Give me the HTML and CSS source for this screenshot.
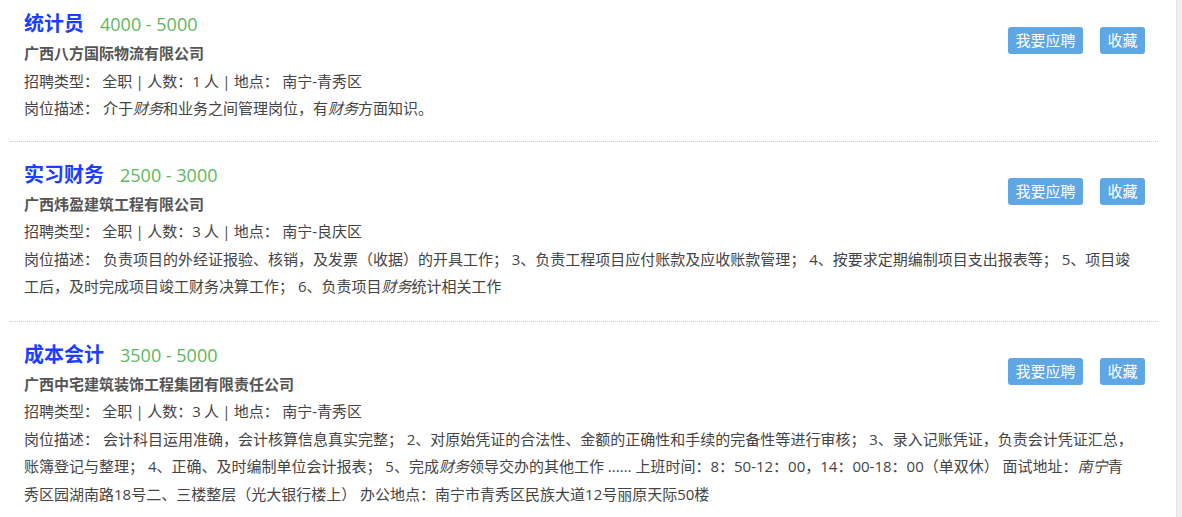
FILE: index.html
```html
<!DOCTYPE html>
<html lang="zh-CN">
<head>
<meta charset="utf-8">
<title>职位列表</title>
<link rel="stylesheet" href="styles.css">
</head>
<body>
<div class="list">
  <div class="job">
    <div class="head">
      <div class="info">
        <div class="title"><a class="name">统计员</a><span class="salary">4000 - 5000</span></div>
        <div class="company">广西八方国际物流有限公司</div>
        <div class="meta">招聘类型： 全职 | 人数：1 人 | 地点： 南宁-青秀区</div>
      </div>
      <div class="actions">
        <a class="btn">我要应聘</a>
        <a class="btn">收藏</a>
      </div>
    </div>
    <div class="desc">岗位描述： 介于<em>财务</em>和业务之间管理岗位，有<em>财务</em>方面知识。</div>
  </div>

  <div class="job">
    <div class="head">
      <div class="info">
        <div class="title"><a class="name">实习财务</a><span class="salary">2500 - 3000</span></div>
        <div class="company">广西炜盈建筑工程有限公司</div>
        <div class="meta">招聘类型： 全职 | 人数：3 人 | 地点： 南宁-良庆区</div>
      </div>
      <div class="actions">
        <a class="btn">我要应聘</a>
        <a class="btn">收藏</a>
      </div>
    </div>
    <div class="desc">岗位描述： 负责项目的外经证报验、核销，及发票（收据）的开具工作； 3、负责工程项目应付账款及应收账款管理； 4、按要求定期编制项目支出报表等； 5、项目竣工后，及时完成项目竣工财务决算工作； 6、负责项目<em>财务</em>统计相关工作</div>
  </div>

  <div class="job">
    <div class="head">
      <div class="info">
        <div class="title"><a class="name">成本会计</a><span class="salary">3500 - 5000</span></div>
        <div class="company">广西中宅建筑装饰工程集团有限责任公司</div>
        <div class="meta">招聘类型： 全职 | 人数：3 人 | 地点： 南宁-青秀区</div>
      </div>
      <div class="actions">
        <a class="btn">我要应聘</a>
        <a class="btn">收藏</a>
      </div>
    </div>
    <div class="desc">岗位描述： 会计科目运用准确，会计核算信息真实完整； 2、对原始凭证的合法性、金额的正确性和手续的完备性等进行审核； 3、录入记账凭证，负责会计凭证汇总，账簿登记与整理； 4、正确、及时编制单位会计报表； 5、完成<em>财务</em>领导交办的其他工作 ...... 上班时间：8：50-12：00，14：00-18：00（单双休） 面试地址：<em>南宁</em>青<br>秀区园湖南路18号二、三楼整层（光大银行楼上） 办公地点：南宁市青秀区民族大道12号丽原天际50楼</div>
  </div>
</div>
<div class="scrollbar"></div>
</body>
</html>
```

FILE: styles.css
```css
html, body {
  margin: 0;
  padding: 0;
  background: #fff;
}

body {
  font-family: "Open Sans", "Noto Sans CJK SC", sans-serif;
  font-size: 15px;
  color: #444;
  width: 1182px;
  height: 517px;
  overflow: hidden;
}

.list {
  width: 1148px;
  margin-left: 10px;
}

.job {
  padding: 17px 13px 20px 14px;
  border-bottom: 1px dotted #c8c8c8;
}

.job:first-child {
  padding-top: 8px;
  padding-bottom: 18px;
}

.head {
  display: flex;
  justify-content: space-between;
  align-items: flex-start;
}

.title {
  height: 32px;
  line-height: 32px;
  display: flex;
  align-items: center;
}

.name {
  font-size: 20px;
  font-weight: bold;
  color: #1d3dff;
}

.salary {
  font-size: 18px;
  color: #5cb85c;
  margin-left: 16px;
}

.company {
  font-weight: bold;
  color: #555;
  line-height: 27.5px;
}

.meta {
  line-height: 27.5px;
  word-spacing: -0.6px;
}

.desc {
  line-height: 27.5px;
}

em {
  font-style: italic;
}

.actions {
  display: flex;
  gap: 17px;
  margin-top: 19px;
}

.btn {
  display: block;
  height: 27px;
  line-height: 27px;
  padding: 0 7.5px;
  background: #5ea7e4;
  color: #fff;
  border-radius: 3px;
  font-size: 15px;
}

.scrollbar {
  position: fixed;
  top: 0;
  right: 0;
  width: 5px;
  height: 100%;
  background: #f1f1f1;
  border-left: 1px solid #e2e2e2;
}
```
